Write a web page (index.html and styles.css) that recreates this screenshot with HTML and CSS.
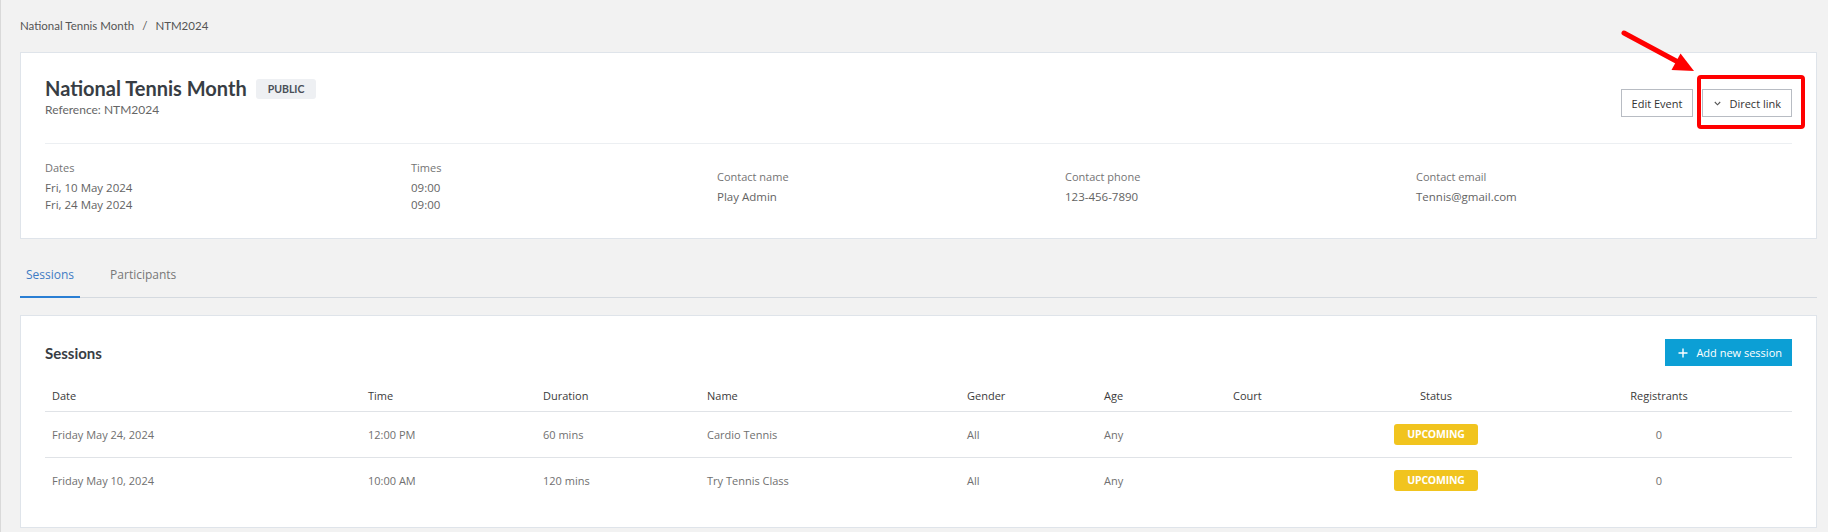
FILE: index.html
```html
<!DOCTYPE html>
<html lang="en">
<head>
<meta charset="utf-8">
<title>National Tennis Month</title>
<link rel="stylesheet" href="styles.css">
</head>
<body>
<div class="page">
  <div class="breadcrumb"><span>National Tennis Month</span><span class="sep">/</span><span>NTM2024</span></div>

  <section class="card event-card">
    <div class="event-header">
      <div class="title-block">
        <div class="title-line">
          <h1 class="event-title">National Tennis Month</h1>
          <span class="tag">PUBLIC</span>
        </div>
        <div class="reference">Reference: NTM2024</div>
      </div>
      <div class="actions">
        <button class="btn">Edit Event</button>
        <button class="btn btn-link">
          <svg class="chev" width="7" height="5" viewBox="0 0 7 5"><path d="M0.8 1 L3.5 3.8 L6.2 1" fill="none" stroke="#555" stroke-width="1.1"/></svg>
          <span>Direct link</span>
        </button>
      </div>
    </div>
    <div class="info-grid">
      <div class="info">
        <div class="label">Dates</div>
        <div class="value">Fri, 10 May 2024</div>
        <div class="value">Fri, 24 May 2024</div>
      </div>
      <div class="info">
        <div class="label">Times</div>
        <div class="value">09:00</div>
        <div class="value">09:00</div>
      </div>
      <div class="info">
        <div class="label">Contact name</div>
        <div class="value">Play Admin</div>
      </div>
      <div class="info">
        <div class="label">Contact phone</div>
        <div class="value">123-456-7890</div>
      </div>
      <div class="info">
        <div class="label">Contact email</div>
        <div class="value">Tennis@gmail.com</div>
      </div>
    </div>
  </section>

  <nav class="tabs">
    <div class="tab active">Sessions</div>
    <div class="tab">Participants</div>
  </nav>

  <section class="card sessions-card">
    <div class="sessions-head">
      <h2 class="sessions-title">Sessions</h2>
      <button class="btn-primary">
        <svg width="10" height="10" viewBox="0 0 10 10"><path d="M5 0.5 V9.5 M0.5 5 H9.5" stroke="#fff" stroke-width="1.4" fill="none"/></svg>
        <span>Add new session</span>
      </button>
    </div>
    <div class="table">
      <div class="row head">
        <div class="cell">Date</div>
        <div class="cell">Time</div>
        <div class="cell">Duration</div>
        <div class="cell">Name</div>
        <div class="cell">Gender</div>
        <div class="cell">Age</div>
        <div class="cell">Court</div>
        <div class="cell center">Status</div>
        <div class="cell center last">Registrants</div>
      </div>
      <div class="row">
        <div class="cell">Friday May 24, 2024</div>
        <div class="cell">12:00 PM</div>
        <div class="cell">60 mins</div>
        <div class="cell">Cardio Tennis</div>
        <div class="cell">All</div>
        <div class="cell">Any</div>
        <div class="cell"></div>
        <div class="cell center"><span class="status">UPCOMING</span></div>
        <div class="cell center last">0</div>
      </div>
      <div class="row">
        <div class="cell">Friday May 10, 2024</div>
        <div class="cell">10:00 AM</div>
        <div class="cell">120 mins</div>
        <div class="cell">Try Tennis Class</div>
        <div class="cell">All</div>
        <div class="cell">Any</div>
        <div class="cell"></div>
        <div class="cell center"><span class="status">UPCOMING</span></div>
        <div class="cell center last">0</div>
      </div>
    </div>
  </section>
</div>

<svg class="annotation" width="1828" height="532" viewBox="0 0 1828 532">
  <rect x="1699" y="77" width="104" height="50" rx="2" fill="none" stroke="#ff0000" stroke-width="4"/>
  <line x1="1624" y1="33" x2="1678" y2="62" stroke="#ff0000" stroke-width="5" stroke-linecap="round"/>
  <polygon points="1694,71 1680.5,53.5 1671.5,70" fill="#ff0000"/>
</svg>
</body>
</html>
```

FILE: styles.css
```css
* { box-sizing: border-box; }

html, body {
  margin: 0;
  padding: 0;
}

body {
  position: relative;
  background: #f2f2f2;
  font-family: "Open Sans", "Liberation Sans", sans-serif;
  color: #555;
  width: 1828px;
  height: 532px;
  overflow: hidden;
}

.page {
  border-left: 1px solid #d9d9d9;
  padding: 19px 11px 0 19px;
  min-height: 532px;
}

.breadcrumb {
  font-family: Lato, "Open Sans", sans-serif;
  font-size: 11.5px;
  line-height: 14px;
  color: #555;
  margin-bottom: 19px;
}

.breadcrumb .sep {
  margin: 0 8px;
}

.card {
  background: #fff;
  border: 1px solid #dfe4ea;
  padding: 0 24px;
}

.event-header {
  display: flex;
  justify-content: space-between;
  align-items: flex-end;
  padding: 23px 0 26px;
  border-bottom: 1px solid #eceff2;
}

.title-line {
  display: flex;
  align-items: center;
  gap: 9px;
}

.event-title {
  margin: 0;
  font-family: Lato, "Open Sans", sans-serif;
  font-weight: 700;
  font-size: 20px;
  line-height: 24px;
  color: #383d44;
}

.tag {
  display: inline-block;
  height: 20px;
  line-height: 20px;
  padding: 0 12px;
  background: #eef0f3;
  border-radius: 3px;
  font-family: Lato, "Open Sans", sans-serif;
  font-weight: 700;
  font-size: 10.5px;
  color: #4a4f57;
  margin-top: 2px;
}

.reference {
  margin-top: 2px;
  font-family: Lato, "Open Sans", sans-serif;
  font-size: 12px;
  line-height: 15px;
  color: #666;
}

.actions {
  display: flex;
  gap: 9px;
}

.btn {
  height: 28px;
  padding: 0 10px;
  border: 1px solid #b8bcc3;
  background: #fff;
  font-family: "Open Sans", sans-serif;
  font-size: 11px;
  color: #333;
  display: flex;
  align-items: center;
  cursor: pointer;
}

.btn-link {
  padding: 0 10px 0 11px;
  gap: 8px;
}

.chev { display: block; }

.info-grid {
  display: grid;
  grid-template-columns: 366px 306px 348px 351px 1fr;
  align-items: center;
  padding: 16px 0 25px;
}

.label {
  font-size: 11px;
  line-height: 15px;
  color: #747474;
  margin-bottom: 4px;
}

.value {
  font-size: 11.5px;
  line-height: 17px;
  color: #636363;
}

.tabs {
  display: flex;
  gap: 24px;
  margin-top: 27px;
  border-bottom: 1px solid #d5dae0;
}

.tab {
  padding: 0 6px 13px;
  font-size: 12px;
  line-height: 17px;
  color: #777;
  border-bottom: 2px solid transparent;
  margin-bottom: -1px;
}

.tab.active {
  color: #3f7cc4;
  border-bottom-color: #2a7fd4;
}

.sessions-card {
  margin-top: 17px;
  padding: 23px 24px 24px;
}

.sessions-head {
  display: flex;
  justify-content: space-between;
  align-items: center;
  margin-bottom: 13px;
}

.sessions-title {
  margin: 0;
  font-family: Lato, "Open Sans", sans-serif;
  font-weight: 700;
  font-size: 15px;
  line-height: 20px;
  color: #383d44;
}

.btn-primary {
  height: 27px;
  padding: 0 10px 0 13px;
  border: none;
  background: #0c9fd5;
  color: #fff;
  font-family: "Open Sans", sans-serif;
  font-size: 11px;
  display: flex;
  align-items: center;
  gap: 8px;
  cursor: pointer;
}

.row {
  display: grid;
  grid-template-columns: 316px 175px 164px 260px 137px 129px 110px 200px 1fr;
  align-items: center;
  height: 46px;
  border-bottom: 1px solid #e0e3e7;
  font-size: 11px;
  line-height: 17px;
  color: #707070;
}

.row:last-child {
  border-bottom: none;
  height: 45px;
}

.row.head {
  height: 33px;
  color: #3b3b3b;
}

.cell {
  padding: 0 7px;
  white-space: nowrap;
}

.cell.center { text-align: center; }

.cell.last { padding-right: 17px; }

.status {
  display: inline-block;
  height: 21px;
  line-height: 21px;
  padding: 0 13px;
  background: #f1c41e;
  border-radius: 3px;
  color: #fff;
  font-weight: 700;
  font-size: 10.5px;
  letter-spacing: -0.2px;
  vertical-align: middle;
}

.annotation {
  position: absolute;
  left: 0;
  top: 0;
  pointer-events: none;
}
```
